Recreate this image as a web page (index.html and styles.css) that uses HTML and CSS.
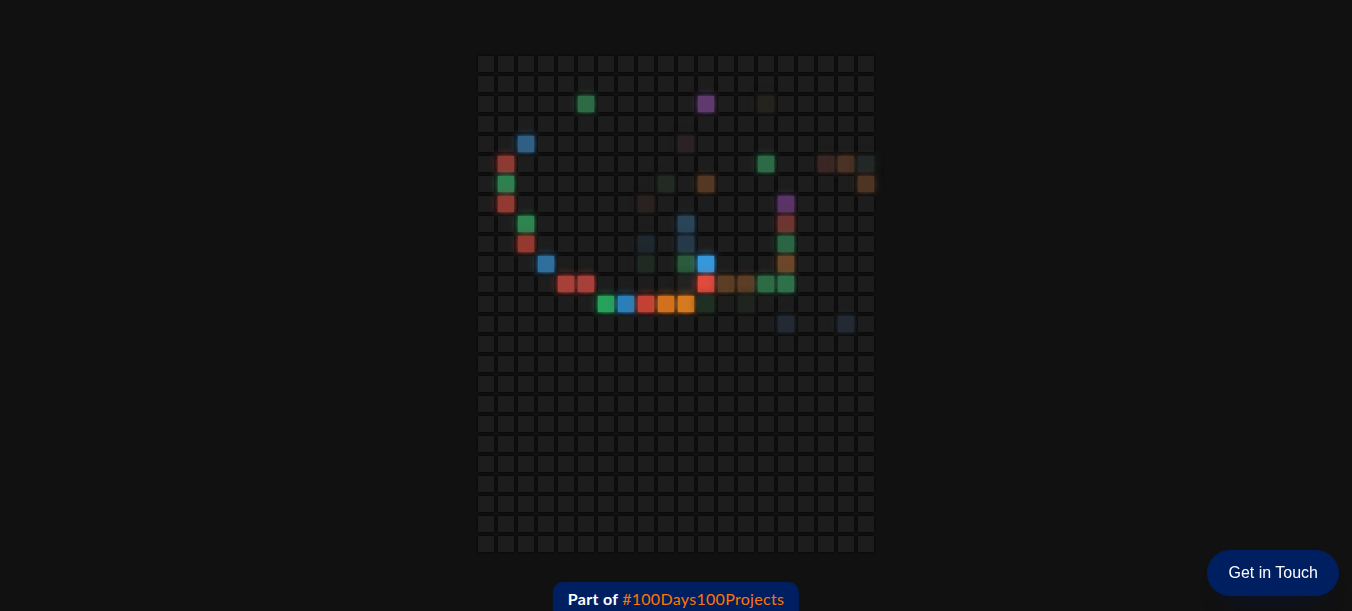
FILE: index.html
```html
<!DOCTYPE html>
<html lang="en">
<head>
    <meta charset="UTF-8">
    <meta name="viewport" content="width=device-width, initial-scale=1.0">
    <title>Hoverboard</title>
    <link rel="stylesheet" href="styles.css">
</head>
<body>
    <div class="container" id="container"></div>

    <button class="floating-btn">Get in Touch</button>

    <div class="floating-text">
        Part of <a href="#">#100Days100Projects</a>
    </div>

    <script>
        const container = document.getElementById("container");
        const SQUARES = 500;
        const COLS = 20;

        const lit = [
            [2, 5, "#2d6b45"], [2, 11, "#5e3a6e"], [2, 14, "#25231d"],
            [4, 2, "#2f5f84"], [4, 10, "#2a2224"],
            [5, 1, "#8e3a32"], [5, 14, "#2c6b45"], [5, 17, "#3a2624"], [5, 18, "#4a3224"], [5, 19, "#222827"],
            [6, 1, "#2f8050"], [6, 9, "#222a24"], [6, 11, "#553823"], [6, 19, "#4d3423"],
            [7, 1, "#923a31"], [7, 8, "#2a2220"], [7, 15, "#5a3468"],
            [8, 2, "#2e8550"], [8, 10, "#2a4458"], [8, 15, "#6e3530"],
            [9, 2, "#94392f"], [9, 8, "#1f282e"], [9, 10, "#26394a"], [9, 15, "#2b6644"],
            [10, 3, "#2e6f9e"], [10, 8, "#1f2a22"], [10, 10, "#2b5a3c"], [10, 11, "#3498db"], [10, 15, "#6b4628"],
            [11, 4, "#a8403a"], [11, 5, "#a8403a"], [11, 10, "#222222"], [11, 11, "#e04b3e"],
            [11, 12, "#5b3e25"], [11, 13, "#5b3e25"], [11, 14, "#2d6b45"], [11, 15, "#2e7049"],
            [12, 6, "#28a15a"], [12, 7, "#2a7fb8"], [12, 8, "#c14134"], [12, 9, "#d1701f"],
            [12, 10, "#d67a20"], [12, 11, "#1f2f24"], [12, 13, "#1f2421"],
            [13, 15, "#232a33"], [13, 18, "#232a33"]
        ];

        const colours = {};
        lit.forEach(([r, c, col]) => colours[r * COLS + c] = col);

        for (let i = 0; i < SQUARES; i++) {
            const square = document.createElement("div");
            square.classList.add("square");
            if (colours[i]) {
                square.style.background = colours[i];
                square.style.boxShadow = `0 0 2px ${colours[i]}, 0 0 10px ${colours[i]}`;
            }
            container.appendChild(square);
        }
    </script>
</body>
</html>
```

FILE: styles.css
```css
* {
    box-sizing: border-box;
}
body {
    background-color: #111;
    margin: 0;
    height: 100vh;
    overflow: hidden;
    font-family: "Lato", sans-serif;
}
.container {
    display: flex;
    flex-wrap: wrap;
    width: 400px;
    margin: 54px auto 0;
}
.square {
    background-color: #1d1d1d;
    box-shadow: 0 0 2px #000;
    width: 16px;
    height: 16px;
    margin: 2px;
}
.floating-btn {
    position: fixed;
    right: 13px;
    bottom: 15px;
    background-color: #001f61;
    border: 1px solid #001f61;
    border-radius: 26.5px;
    box-shadow: 0 16px 22px -17px #03153b;
    color: #fff;
    font-family: "Liberation Sans", Arial, sans-serif;
    font-size: 16px;
    line-height: 20px;
    padding: 12px 20px;
    cursor: pointer;
}
.floating-text {
    position: fixed;
    left: 50%;
    top: 582px;
    transform: translateX(-50%);
    background-color: #001f61;
    border-radius: 10px 10px 0 0;
    color: #fff;
    font-size: 16px;
    font-weight: 700;
    letter-spacing: 0.3px;
    padding: 7px 15px 10px;
    white-space: nowrap;
}
.floating-text a {
    color: #ff7500;
    font-weight: 400;
    text-decoration: none;
}
```
